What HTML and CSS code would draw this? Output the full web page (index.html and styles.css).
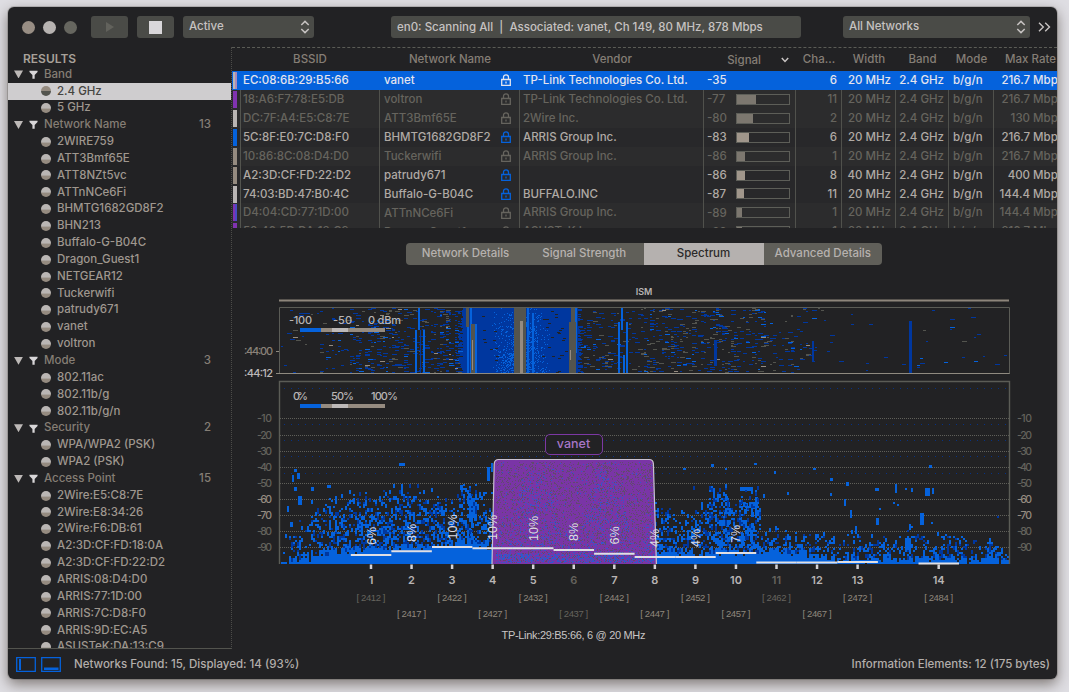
FILE: index.html
```html
<!DOCTYPE html>
<html lang="en">
<head>
<meta charset="utf-8">
<title>WiFi Explorer</title>
<link rel="stylesheet" href="styles.css">
</head>
<body>
<svg class="defs" width="0" height="0">
  <symbol id="lock" viewBox="0 0 10 12"><path d="M2.5 5.5V3.3a2.5 2.5 0 0 1 5 0v2.2M.7 5.5h8.6v6H.7zM5 7.5v2" fill="none" stroke="currentColor" stroke-width="1.3"/></symbol>
  <symbol id="updown" viewBox="0 0 10 14"><path d="M1.3 5 5 1.4 8.7 5M1.3 9 5 12.6 8.7 9" fill="none" stroke="currentColor" stroke-width="1.5"/></symbol>
  <symbol id="funnel" viewBox="0 0 10 10"><path d="M.5.8h9v1.4L6.3 5.6v4H3.8v-4L.5 2.2z" fill="currentColor"/></symbol>
</svg>
<div class="window">
  <header class="toolbar">
    <div class="lights"><i class="close"></i><i class="mini"></i><i class="full"></i></div>
    <button class="tool play"><svg width="10" height="12" viewBox="0 0 10 12"><path d="M1 1l8 5-8 5z" fill="#62625c"/></svg></button>
    <button class="tool stop"><i></i></button>
    <div class="select mode-select"><span>Active</span><svg width="10" height="14"><use href="#updown"/></svg></div>
    <div class="status">en0: Scanning All &nbsp;|&nbsp; Associated: vanet, Ch 149, 80 MHz, 878 Mbps</div>
    <div class="select net-select"><span>All Networks</span><svg width="10" height="14"><use href="#updown"/></svg></div>
    <svg class="more" width="13" height="10" viewBox="0 0 13 10"><path d="M1 .8 5.3 5 1 9.2M7.2.8 11.5 5 7.2 9.2" fill="none" stroke="currentColor" stroke-width="1.4"/></svg>
  </header>
  <div class="body">
    <aside class="sidebar">
      <h2>RESULTS</h2>
      <ul>
        <li class="group"><svg><use href="#funnel"/></svg>Band</li>
        <li class="on">2.4 GHz</li>
        <li>5 GHz</li>
        <li class="group"><svg><use href="#funnel"/></svg>Network Name<b>13</b></li>
        <li>2WIRE759</li>
        <li>ATT3Bmf65E</li>
        <li>ATT8NZt5vc</li>
        <li>ATTnNCe6Fi</li>
        <li>BHMTG1682GD8F2</li>
        <li>BHN213</li>
        <li>Buffalo-G-B04C</li>
        <li>Dragon_Guest1</li>
        <li>NETGEAR12</li>
        <li>Tuckerwifi</li>
        <li>patrudy671</li>
        <li>vanet</li>
        <li>voltron</li>
        <li class="group"><svg><use href="#funnel"/></svg>Mode<b>3</b></li>
        <li>802.11ac</li>
        <li>802.11b/g</li>
        <li>802.11b/g/n</li>
        <li class="group"><svg><use href="#funnel"/></svg>Security<b>2</b></li>
        <li>WPA/WPA2 (PSK)</li>
        <li>WPA2 (PSK)</li>
        <li class="group"><svg><use href="#funnel"/></svg>Access Point<b>15</b></li>
        <li>2Wire:E5:C8:7E</li>
        <li>2Wire:E8:34:26</li>
        <li>2Wire:F6:DB:61</li>
        <li>A2:3D:CF:FD:18:0A</li>
        <li>A2:3D:CF:FD:22:D2</li>
        <li>ARRIS:08:D4:D0</li>
        <li>ARRIS:77:1D:00</li>
        <li>ARRIS:7C:D8:F0</li>
        <li>ARRIS:9D:EC:A5</li>
        <li>ASUSTeK:DA:13:C9</li>
      </ul>
    </aside>
    <main class="main">
      <section class="table">
        <div class="row head"><span></span><span>BSSID</span><span>Network Name</span><span>Vendor</span><span class="sorted">Signal<svg width="8" height="6" viewBox="0 0 8 6"><path d="M.8 1 4 4.4 7.2 1" fill="none" stroke="currentColor" stroke-width="1.5"/></svg></span><span>Cha…</span><span>Width</span><span>Band</span><span>Mode</span><span>Max Rate</span></div>
        <div class="row sel"><i class="chip mixed"></i><span>EC:08:6B:29:B5:66</span><span class="name">vanet<svg><use href="#lock"/></svg></span><span>TP-Link Technologies Co. Ltd.</span><span>-35</span><span>6</span><span>20 MHz</span><span>2.4 GHz</span><span>b/g/n</span><span>216.7 Mbps</span></div>
        <div class="row dim"><i class="chip purple"></i><span>18:A6:F7:78:E5:DB</span><span class="name">voltron<svg><use href="#lock"/></svg></span><span>TP-Link Technologies Co. Ltd.</span><span class="sig">-77<i class="bar"><i style="width:19px"></i></i></span><span>11</span><span>20 MHz</span><span>2.4 GHz</span><span>b/g/n</span><span>216.7 Mbps</span></div>
        <div class="row dim"><i class="chip light"></i><span>DC:7F:A4:E5:C8:7E</span><span class="name">ATT3Bmf65E<svg><use href="#lock"/></svg></span><span>2Wire Inc.</span><span class="sig">-80<i class="bar"><i style="width:16px"></i></i></span><span>2</span><span>20 MHz</span><span>2.4 GHz</span><span>b/g/n</span><span>130 Mbps</span></div>
        <div class="row"><i class="chip blue"></i><span>5C:8F:E0:7C:D8:F0</span><span class="name">BHMTG1682GD8F2<svg><use href="#lock"/></svg></span><span>ARRIS Group Inc.</span><span class="sig">-83<i class="bar"><i style="width:12px"></i></i></span><span>6</span><span>20 MHz</span><span>2.4 GHz</span><span>b/g/n</span><span>216.7 Mbps</span></div>
        <div class="row dim"><i class="chip tan"></i><span>10:86:8C:08:D4:D0</span><span class="name">Tuckerwifi<svg><use href="#lock"/></svg></span><span>ARRIS Group Inc.</span><span class="sig">-86<i class="bar"><i style="width:8px"></i></i></span><span>1</span><span>20 MHz</span><span>2.4 GHz</span><span>b/g/n</span><span>216.7 Mbps</span></div>
        <div class="row"><i class="chip tan"></i><span>A2:3D:CF:FD:22:D2</span><span class="name">patrudy671<svg><use href="#lock"/></svg></span><span></span><span class="sig">-86<i class="bar"><i style="width:8px"></i></i></span><span>8</span><span>40 MHz</span><span>2.4 GHz</span><span>b/g/n</span><span>400 Mbps</span></div>
        <div class="row"><i class="chip light"></i><span>74:03:BD:47:B0:4C</span><span class="name">Buffalo-G-B04C<svg><use href="#lock"/></svg></span><span>BUFFALO.INC</span><span class="sig">-87<i class="bar"><i style="width:7px"></i></i></span><span>11</span><span>20 MHz</span><span>2.4 GHz</span><span>b/g/n</span><span>144.4 Mbps</span></div>
        <div class="row dim"><i class="chip violet"></i><span>D4:04:CD:77:1D:00</span><span class="name">ATTnNCe6Fi<svg><use href="#lock"/></svg></span><span>ARRIS Group Inc.</span><span class="sig">-89<i class="bar"><i style="width:5px"></i></i></span><span>1</span><span>20 MHz</span><span>2.4 GHz</span><span>b/g/n</span><span>144.4 Mbps</span></div>
        <div class="row dim last"><i class="chip purple"></i><span>50:46:5D:DA:13:C9</span><span class="name">Dragon_Guest1<svg><use href="#lock"/></svg></span><span>ASUSTeK Inc.</span><span class="sig">-89<i class="bar"><i style="width:5px"></i></i></span><span>1</span><span>20 MHz</span><span>2.4 GHz</span><span>b/g/n</span><span>216.7 Mbps</span></div>
      </section>
      <nav class="tabs"><span>Network Details</span><span>Signal Strength</span><span class="active">Spectrum</span><span>Advanced Details</span></nav>
      <svg class="spectrum" width="825" height="378" viewBox="232 270 825 378">
        <text class="ism" x="644" y="295">ISM</text>
        <path d="M279 300.5h730" stroke="#8d857b" stroke-width="2"/>
        <g id="heat"></g>
        <path d="M279.5 374V307.500H1009.500V374" fill="none" stroke="#5b5c56"/>
        <path d="M276 373.500h733.500" stroke="#8f8a80"/>
        <path d="M276 351.500h3" stroke="#8f8a80"/>
        <g id="grid"></g>
        <g id="noise"></g>
        <path d="M279.500 564V381.500H1009.500V564" fill="none" stroke="#5b5c56" stroke-width="1.4"/>
        <path d="M492 564l2.200-100q.3-4.500 4.500-4.500h150.500q4 0 4.200 4.500l3 100z" fill="#7a35a6"/>
        <g id="overlay"></g>
        <path d="M492 564l2.200-100q.3-4.500 4.500-4.500h150.500q4 0 4.200 4.500l3 100" fill="none" stroke="#c9c2d0" stroke-width="1.200"/>
        <rect x="545.500" y="434.500" width="57" height="20" rx="4.500" fill="#222224" stroke="#7c38a4"/>
        <text class="tag" x="573.500" y="447.500">vanet</text>
        <g class="legend">
          <text x="289" y="324" textLength="23">-100</text><text x="333" y="324" textLength="19">-50</text><text x="368" y="324" textLength="33">0 dBm</text>
          <text x="293" y="400" textLength="15">0%</text><text x="331" y="400" textLength="23">50%</text><text x="371" y="400" textLength="27">100%</text>
          <path d="M300 330h21M300 406h21" stroke="#0562dc"/><path d="M321 330h64M321 406h64" stroke="#958b80"/><path d="M332 330h16M332 406h16" stroke="#bdb9b8"/>
        </g>
        <text class="time" x="244" y="355" textLength="29">:44:00</text>
        <text class="time now" x="244" y="377" textLength="29">:44:12</text>
        <g id="axes"></g>
        <text class="caption" x="501.500" y="638.500" textLength="144">TP-Link:29:B5:66, 6 @ 20 MHz</text>
      </svg>
    </main>
  </div>
  <footer class="footer">
    <svg width="46" height="15" viewBox="0 0 46 15"><path d="M.7.700h18.600v13.600H.7zM25.700.700h18.600v13.600H25.700z" fill="none" stroke="#0562dc" stroke-width="1.300"/><path d="M3 2h2v11H3zM28 10.500h14.500v2.500H28z" fill="#0562dc"/></svg>
    <span class="found">Networks Found: 15, Displayed: 14 (93%)</span>
    <span class="info">Information Elements: 12 (175 bytes)</span>
  </footer>
</div>
<script src="spectrum.js"></script>
</body>
</html>
```

FILE: styles.css
```css
* { box-sizing: border-box; }
html, body { height: 100%; }
body {
  margin: 0;
  padding: 7px 12px 13px 8px;
  overflow: hidden;
  background: #dfdee3;
  font: 500 11.5px/1 Inter, "Liberation Sans", sans-serif;
  color: #9f978f;
}
.defs { display: none; }
.window {
  display: flex;
  flex-direction: column;
  height: 672px;
  border-radius: 6px;
  background: #222224;
  overflow: hidden;
  box-shadow: 0 5px 14px rgba(60, 50, 42, .6), 0 0 0 1px #bdbcbf;
}
.toolbar {
  display: flex;
  align-items: center;
  flex: 0 0 40px;
  padding-left: 14px;
  color: #c6c2c1;
}
.lights { display: flex; gap: 8px; width: 69px; }
.lights i { width: 13px; height: 13px; border-radius: 50%; }
.close { background: #988e84; }
.mini { background: #b7b3b1; }
.full { background: #66665f; }
.tool, .select, .status { height: 22px; border: 0; border-radius: 3px; background: #4a4b47; }
.tool { display: grid; place-items: center; width: 37px; padding: 0; margin-right: 9px; }
.stop i { width: 13px; height: 13px; background: #d9d7da; }
.select { display: flex; align-items: center; justify-content: space-between; padding: 0 4px 0 6px; }
.mode-select { width: 131px; }
.status { width: 410px; margin-left: 77px; padding: 0 6px; line-height: 22px; white-space: nowrap; }
.net-select { width: 187px; margin-left: 42px; }
.more { margin-left: 8px; }
.body { display: flex; flex: none; height: 601px; }
.sidebar { width: 224px; height: 602px; border-right: 1px dotted #4c4c49; border-bottom: 1px solid #53544e; overflow: hidden; }
.sidebar h2 { margin: 0; padding: 6px 0 0 15px; height: 19px; font-size: 12px; font-weight: 600; line-height: 12px; color: #a8a19a; }
.sidebar ul { margin: 0; padding: 0; list-style: none; }
.sidebar li {
  display: flex;
  align-items: center;
  height: 16.85px;
  padding-left: 33px;
  white-space: nowrap;
}
.sidebar li::before {
  content: "";
  width: 10px;
  height: 10px;
  margin-right: 6px;
  border-radius: 50%;
  background: linear-gradient(#bab6b4 50%, #958b80 62%);
}
.sidebar .group { padding-left: 6px; color: #857e75; }
.sidebar .group::before {
  width: 9px;
  height: 8px;
  border-radius: 0;
  background: #bdb9b7;
  clip-path: polygon(0 0, 100% 0, 50% 100%);
}
.sidebar .group svg { width: 9px; height: 9px; margin-right: 6px; color: #d8d6d8; }
.sidebar .group b { margin-left: auto; margin-right: 20px; font-weight: 500; }
.sidebar .on { background: #cfcdcf; color: #45443f; }
.sidebar .on::before { background: linear-gradient(#958b80 50%, #53544e 50%); }
.main { display: flex; flex-direction: column; width: 825px; }
.table { height: 181px; overflow: hidden; border-top: 1px dashed #5b5c56; }
.row {
  display: grid;
  grid-template-columns: 8px 140px 140px 184px 92px 46px 54px 53px 45px 70px;
  height: 18.93px;
  line-height: 18px;
  color: #b0aaa5;
  background: #28282a;
}
.row > span { padding-left: 3px; white-space: nowrap; border-right: 1px solid #50514c; }
.row > span:nth-child(2) { padding-left: 2px; border-left: 1px solid #53544e; }
.row > span:nth-child(3) { padding-left: 4px; }
.row > span:nth-child(n+6) { padding: 0 4px 0 0; text-align: right; }
.row > span:nth-child(9) { padding: 0 0 0 4px; text-align: left; }
.row > span:nth-child(10) { padding-right: 0; border: 0; }
.dim { color: #66645e; background: #2c2c2d; }
.row.head { height: 23px; background: none; color: #857e76; line-height: 22px; }
.row.head > span { padding: 0; border: 0; text-align: center; }
.row.head > .sorted { display: flex; align-items: center; justify-content: flex-end; gap: 20px; padding-right: 7px; }
.sorted svg { color: #c9c5c4; }
.row.head > span:last-child { text-align: left; padding-left: 11px; }
.row.sel { background: #0562dc; color: #e3e4ee; }
.row.sel > span { border-color: transparent; }
.chip { width: 4px; height: 17px; margin: 1px 0 0 1px; }
.mixed { background: linear-gradient(90deg, #b9b5b4 50%, #a98abb 50%); }
.purple { background: #8033b0; }
.light { background: #b9b5b4; }
.blue { background: #0562dc; }
.tan { background: #958b80; }
.violet { background: linear-gradient(90deg, #8033b0 50%, #4a49c4 50%); }
.row > .name { display: flex; align-items: center; justify-content: space-between; padding-right: 8px; }
.name svg { width: 10px; height: 12px; color: #0562dc; }
.dim .name svg { color: #66645e; }
.sel .name svg { color: #e3e4ee; }
.row > .sig { display: flex; align-items: center; justify-content: space-between; padding-right: 5px; }
.bar { display: block; width: 54px; height: 11px; border: 1px solid #5d5e58; }
.bar i { display: block; height: 9px; background: #a0968b; }
.dim .bar i { background: #7c776f; }
.tabs {
  display: grid;
  grid-template-columns: 119px 118.5px 120px 118.5px;
  width: 476px;
  height: 22px;
  margin: 15px 0 5px 174px;
  border-radius: 4px;
  overflow: hidden;
  background: #605f59;
  color: #b7b2af;
  line-height: 21px;
  text-align: center;
}
.tabs .active { background: #b5b1af; color: #2b2a2a; }
.spectrum { display: block; }
.spectrum text { font-family: Inter, sans-serif; font-size: 11px; fill: #b9b5b4; }
.spectrum .ism { font-size: 9px; font-weight: 600; text-anchor: middle; }
.spectrum .tag { font-size: 12.5px; fill: #a776c6; text-anchor: middle; }
.legend path { stroke-width: 4; }
.spectrum .time { fill: #8a8279; }
.spectrum .now { fill: #bdb9b8; }
.spectrum .db { font-size: 10.5px; fill: #64635d; }
.spectrum .db.hi { fill: #958b80; }
.spectrum .ch { font-size: 11px; font-weight: 600; text-anchor: middle; }
.spectrum .freq { font: 9.5px "Liberation Sans", sans-serif; fill: #8f877d; text-anchor: middle; }
.spectrum .low { fill: #66645e; }
.spectrum .pct { font: 12.5px "Liberation Sans", sans-serif; fill: #dddbe0; }
.spectrum .caption { font: 11px "Liberation Sans", sans-serif; fill: #c8c5c5; }
.footer { display: flex; align-items: center; height: 31px; padding: 2px 7px 0 8px; color: #b3aeab; }
.footer .found { margin-left: 12px; }
.footer .info { margin-left: auto; }
```

FILE: spectrum.js
```js
const NS = "http://www.w3.org/2000/svg";
let seed = 20177;
const rnd = () => {
  seed = (seed * 1664525 + 1013904223) >>> 0;
  return seed / 4294967296;
};
const el = (parent, tag, attrs, text) => {
  const node = document.createElementNS(NS, tag);
  for (const k in attrs) node.setAttribute(k, attrs[k]);
  if (text) node.textContent = text;
  document.getElementById(parent).append(node);
};
const layer = () => ({});
const cell = (l, color, x, y, w, h) => {
  l[color] = (l[color] || "") + `M${x} ${y}h${w}v${h}h${-w}z`;
};
const flush = (id, l) => {
  for (const c in l) el(id, "path", { d: l[c], fill: c, "shape-rendering": "crispEdges" });
};
const BLUE = "#0562dc", NAVY = "#00379f", GREY = "#53544e", TAN = "#958b80";

// Waterfall: short dashes whose density depends on frequency.
const density = x =>
  x < 320 ? 0.02 : x < 350 ? 0.06 : x < 400 ? 0.14 : x < 440 ? 0.12 : x < 460 ? 0.22 :
  x < 580 ? 0 : x < 610 ? 0.12 : x < 640 ? 0.07 : x < 765 ? 0.12 : x < 815 ? 0.06 : 0.009;
const heat = layer();
cell(heat, NAVY, 465, 308, 113, 65);
for (let y = 308; y < 373; y++) {
  for (let x = 281; x < 1006; x += 3) {
    if (rnd() < density(x)) {
      const r = rnd();
      const grey = x > 640 && x < 765 ? 0.34 : 0.14;
      cell(heat, r < grey ? GREY : r < grey + 0.1 ? BLUE : r > 0.98 ? TAN : NAVY, x, y, 2 + Math.floor(rnd() * 4), 1);
    }
  }
  cell(heat, NAVY, 463 - Math.floor(rnd() * (y - 300) / 7), y, 12, 1);
  cell(heat, NAVY, 576, y, Math.floor(rnd() * 8), 1);
}
flush("heat", heat);
const bands = layer();
for (let y = 308; y < 373; y++) {
  for (let x = 482; x < 566; x++) {
    const d = Math.abs(x - 520);
    if (rnd() < 0.5 * Math.max(0, 1 - d / 30) * (0.3 + (y - 308) / 70)) cell(bands, BLUE, x, y, 1, 1);
    else if (d > 20 && rnd() < 0.012) cell(bands, "#222224", x, y, 3, 1);
  }
}
[[417.5, 308, 2, 22, BLUE], [415, 330, 2, 43, BLUE], [420, 330, 1, 43, NAVY], [423, 330, 2, 43, BLUE],
 [466, 308, 3, 19, GREY], [467, 327, 2, 46, BLUE], [470, 308, 2, 65, BLUE], [475, 324, 2, 49, BLUE],
 [471, 324, 4, 49, GREY], [472, 340, 1, 30, TAN], [514, 308, 12, 65, GREY], [515, 345, 2, 28, BLUE],
 [519.5, 321, 3, 52, TAN], [527, 308, 2, 65, BLUE], [531.5, 313, 2, 60, BLUE], [571, 308, 4, 14, GREY],
 [569, 322, 7, 51, GREY], [575, 308, 2, 45, BLUE], [569.500, 350, 1, 10, TAN], [618, 322, 2, 51, BLUE],
 [620.5, 308, 2, 22, BLUE], [626, 322, 2, 51, BLUE], [623, 355, 2, 18, BLUE], [909, 321, 3, 52, NAVY],
 [910, 345, 1, 20, BLUE], [714, 340, 3, 26, NAVY], [812, 341, 2, 20, NAVY]
].forEach(([x, y, w, h, c]) => cell(bands, c, x, y, w, h));
flush("heat", bands);

// Horizontal grid and amplitude scale.
for (let i = 1; i <= 9; i++) {
  const y = 402.3 + i * 16.13;
  el("grid", "path", { d: `M280 ${Math.round(y) + 0.5}h729`, stroke: "#5f5f59", "stroke-dasharray": "1 1" });
  const cls = i === 6 || i === 7 ? "db hi" : "db";
  el("axes", "text", { x: 257, y: y + 4, class: cls, textLength: 15 }, `-${i}0`);
  el("axes", "text", { x: 1017, y: y + 4, class: cls, textLength: 15 }, `-${i}0`);
}
[388.5, 424.5, 440.5, 456.5, 473.5].forEach(y =>
  el("grid", "path", { d: `M284 ${y}h724`, stroke: NAVY, "stroke-dasharray": "1 6", opacity: 0.8 }));

// Amplitude cloud: [x, top of cloud, solid floor, density].
const profile = [[280, 530, 560, 0.1], [300, 520, 558, 0.35], [325, 500, 553, 0.4], [345, 488, 549, 0.5],
  [385, 490, 546, 0.6], [400, 480, 545, 0.62], [436, 485, 546, 0.6], [450, 500, 545, 0.5], [462, 483, 541, 0.65],
  [476, 485, 542, 0.65], [490, 490, 545, 0.5], [655, 495, 551, 0.6], [675, 512, 551, 0.5], [700, 500, 551, 0.5],
  [712, 482, 551, 0.6], [722, 476, 551, 0.65], [735, 500, 551, 0.5], [745, 482, 551, 0.6], [757, 480, 550, 0.55], [763, 525, 549, 0.4],
  [800, 530, 552, 0.4], [835, 530, 557, 0.4], [890, 535, 558, 0.35], [908, 522, 557, 0.4], [925, 540, 558, 0.3],
  [950, 530, 557, 0.45], [980, 535, 558, 0.35], [1009, 545, 558, 0.3]];
const at = x => {
  let i = 1;
  while (i < profile.length - 1 && profile[i][0] < x) i++;
  const a = profile[i - 1], b = profile[i], t = (x - a[0]) / (b[0] - a[0]);
  return a.map((v, k) => v + (b[k] - v) * t);
};
const noise = layer();
for (let x = 281; x < 1008; x += 2) {
  const [, top, floor, d] = at(x);
  const lift = rnd() * 10 - 5;
  for (let y = 484; y < 564; y += 2) {
    const f = (y - top - lift) / (floor - top);
    const clump = 0.85 + 0.3 * Math.sin(x / 3.1 + Math.sin(y / 7)) * Math.cos(y / 5.3 + x / 13);
    const p = y > floor + lift ? 1 : f > 0 ? d * clump * Math.pow(f, 0.45) : 0.003;
    if (rnd() < p) cell(noise, y <= floor && rnd() < 0.3 ? NAVY : BLUE, x, y, 2, rnd() < 0.4 && y < 562 ? 4 : 2);
  }
}
for (let i = 0; i < 60; i++) {
  cell(noise, BLUE, [467, 739, 748, 722, 464][i % 5] + Math.round(rnd() * 8), 490 + Math.round(rnd() * 55), 3, 5);
}
[[294, 469, 3, 3], [292, 475, 2, 7], [297, 473, 3, 6], [294, 487, 3, 4], [298, 496, 4, 9], [311, 487, 3, 4],
 [327, 485, 4, 3], [287, 506, 2, 6], [290, 522, 3, 5], [399, 463, 6, 3], [460, 485, 3, 5], [487, 467, 3, 14],
 [491, 463, 2, 9], [683, 468, 3, 2], [711, 464, 3, 3], [754, 463, 3, 2], [725, 468, 2, 2], [774, 471, 2, 3],
 [813, 468, 3, 2], [830, 478, 3, 3], [830, 493, 2, 3], [846, 482, 3, 4], [844, 499, 2, 7], [850, 510, 2, 8],
 [895, 484, 2, 9], [911, 488, 2, 4], [925, 488, 5, 8], [929, 465, 3, 3], [932, 488, 2, 6], [875, 488, 4, 3],
 [920, 513, 4, 12], [876, 518, 3, 7], [855, 526, 2, 8], [905, 538, 6, 14], [787, 492, 2, 3], [740, 487, 13, 4]
].forEach(([x, y, w, h]) => cell(noise, BLUE, x, y, w, h));
flush("noise", noise);

const over = layer();
for (let x = 496; x < 654; x += 1) {
  const peak = 500 + 35 * Math.sin(x / 11) + 10 * Math.sin(x / 4);
  for (let y = 462; y < 563; y += 1) {
    if (rnd() < (y > 553 ? 0.35 : y > peak ? 0.11 : 0.02)) cell(over, "#3257cc", x, y, 1, 1);
    else if (rnd() < 0.18) cell(over, "#62496f", x, y, 1, 1);
  }
}
flush("overlay", over);

// Channels: [number, level line y, utilisation, bottom of its label, dimmed].
[[1, 555, "6%", 545, 0, 1], [2, 551.3, "8%", 542], [3, 547, "10%", 539.5], [4, 548.2, "10%", 540], [5, 548.2, "10%", 541],
 [6, 550, "8%", 541, 1, 1], [7, 553.8, "6%", 544.5], [8, 557, "4%", 547], [9, 557, "4%", 547], [10, 553, "7%", 543],
 [11, 562.5, "", 0, 1, 1], [12, 562.5], [13, 562], [14, 563.5]
].forEach(([n, y, pct, base, dim, lowFreq]) => {
  const x = n === 14 ? 938.7 : 371 + (n - 1) * 40.55;
  el("axes", "path", { d: `M${x - 20.2} ${y}h40.500`, stroke: "#e0dfe4", "stroke-width": 2 });
  el("axes", "path", { d: `M${x} 564.500v4.500`, stroke: "#d5d3d6", "stroke-width": 2.5 });
  el("axes", "text", { x, y: 584, class: dim ? "ch low" : "ch" }, String(n));
  const mhz = n === 14 ? 2484 : 2407 + n * 5;
  el("axes", "text", { x, y: n % 2 || n === 14 ? 600.5 : 616.5, class: lowFreq ? "freq low" : "freq", textLength: 29 }, `[ ${mhz} ]`);
  if (pct) el("axes", "text", { transform: `translate(${x + 4.5} ${base}) rotate(-90)`, class: "pct" }, pct);
});
```
